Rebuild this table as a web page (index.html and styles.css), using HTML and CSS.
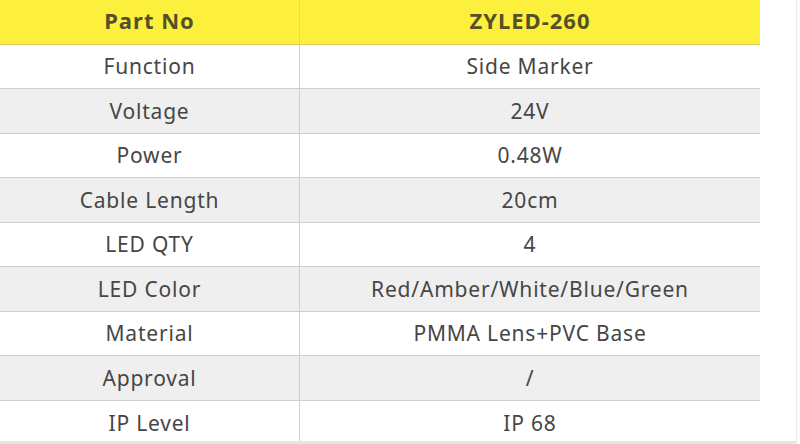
FILE: index.html
```html
<!DOCTYPE html>
<html>
<head>
<meta charset="utf-8">
<link rel="stylesheet" href="styles.css">
</head>
<body>
<div class="frame">
<table class="spec">
<thead>
<tr><th class="c1">Part No</th><th>ZYLED-260</th></tr>
</thead>
<tbody>
<tr><td class="c1">Function</td><td>Side Marker</td></tr>
<tr><td class="c1">Voltage</td><td>24V</td></tr>
<tr><td class="c1">Power</td><td>0.48W</td></tr>
<tr><td class="c1">Cable Length</td><td>20cm</td></tr>
<tr><td class="c1">LED QTY</td><td>4</td></tr>
<tr><td class="c1">LED Color</td><td>Red/Amber/White/Blue/Green</td></tr>
<tr><td class="c1">Material</td><td>PMMA Lens+PVC Base</td></tr>
<tr><td class="c1">Approval</td><td>/</td></tr>
<tr><td class="c1">IP Level</td><td>IP 68</td></tr>
</tbody>
</table>
</div>
</body>
</html>
```
FILE: styles.css
```css
html, body {
  margin: 0;
  padding: 0;
  background: #ffffff;
}
.frame {
  width: 796px;
  height: 441px;
  border-right: 1px solid #ececec;
  border-bottom: 3px solid #e6e6e6;
  overflow: hidden;
}
.spec {
  width: 760px;
  border-collapse: collapse;
  font-family: "Noto Sans", "Open Sans", sans-serif;
  font-size: 21px;
  letter-spacing: 0.8px;
  color: #464646;
  table-layout: fixed;
}
.spec th, .spec td {
  text-align: center;
  padding: 0;
  line-height: 22px;
}
.spec th.c1, .spec td.c1 {
  width: 299px;
  border-right: 1px solid #cfcfcf;
}
.spec thead tr {
  background: #fdf03c;
  height: 44px;
}
.spec th {
  font-size: 22px;
  letter-spacing: 1px;
  font-weight: 700;
  color: #55502a;
  border-bottom: 1px solid #d9cc6a;
  padding-bottom: 3px;
}
.spec tbody tr {
  height: 44.5px;
  border-bottom: 1px solid #cfcfcf;
}
.spec tbody tr:last-child {
  border-bottom: none;
}
.spec tbody tr:nth-child(even) {
  background: #efefef;
}
```
